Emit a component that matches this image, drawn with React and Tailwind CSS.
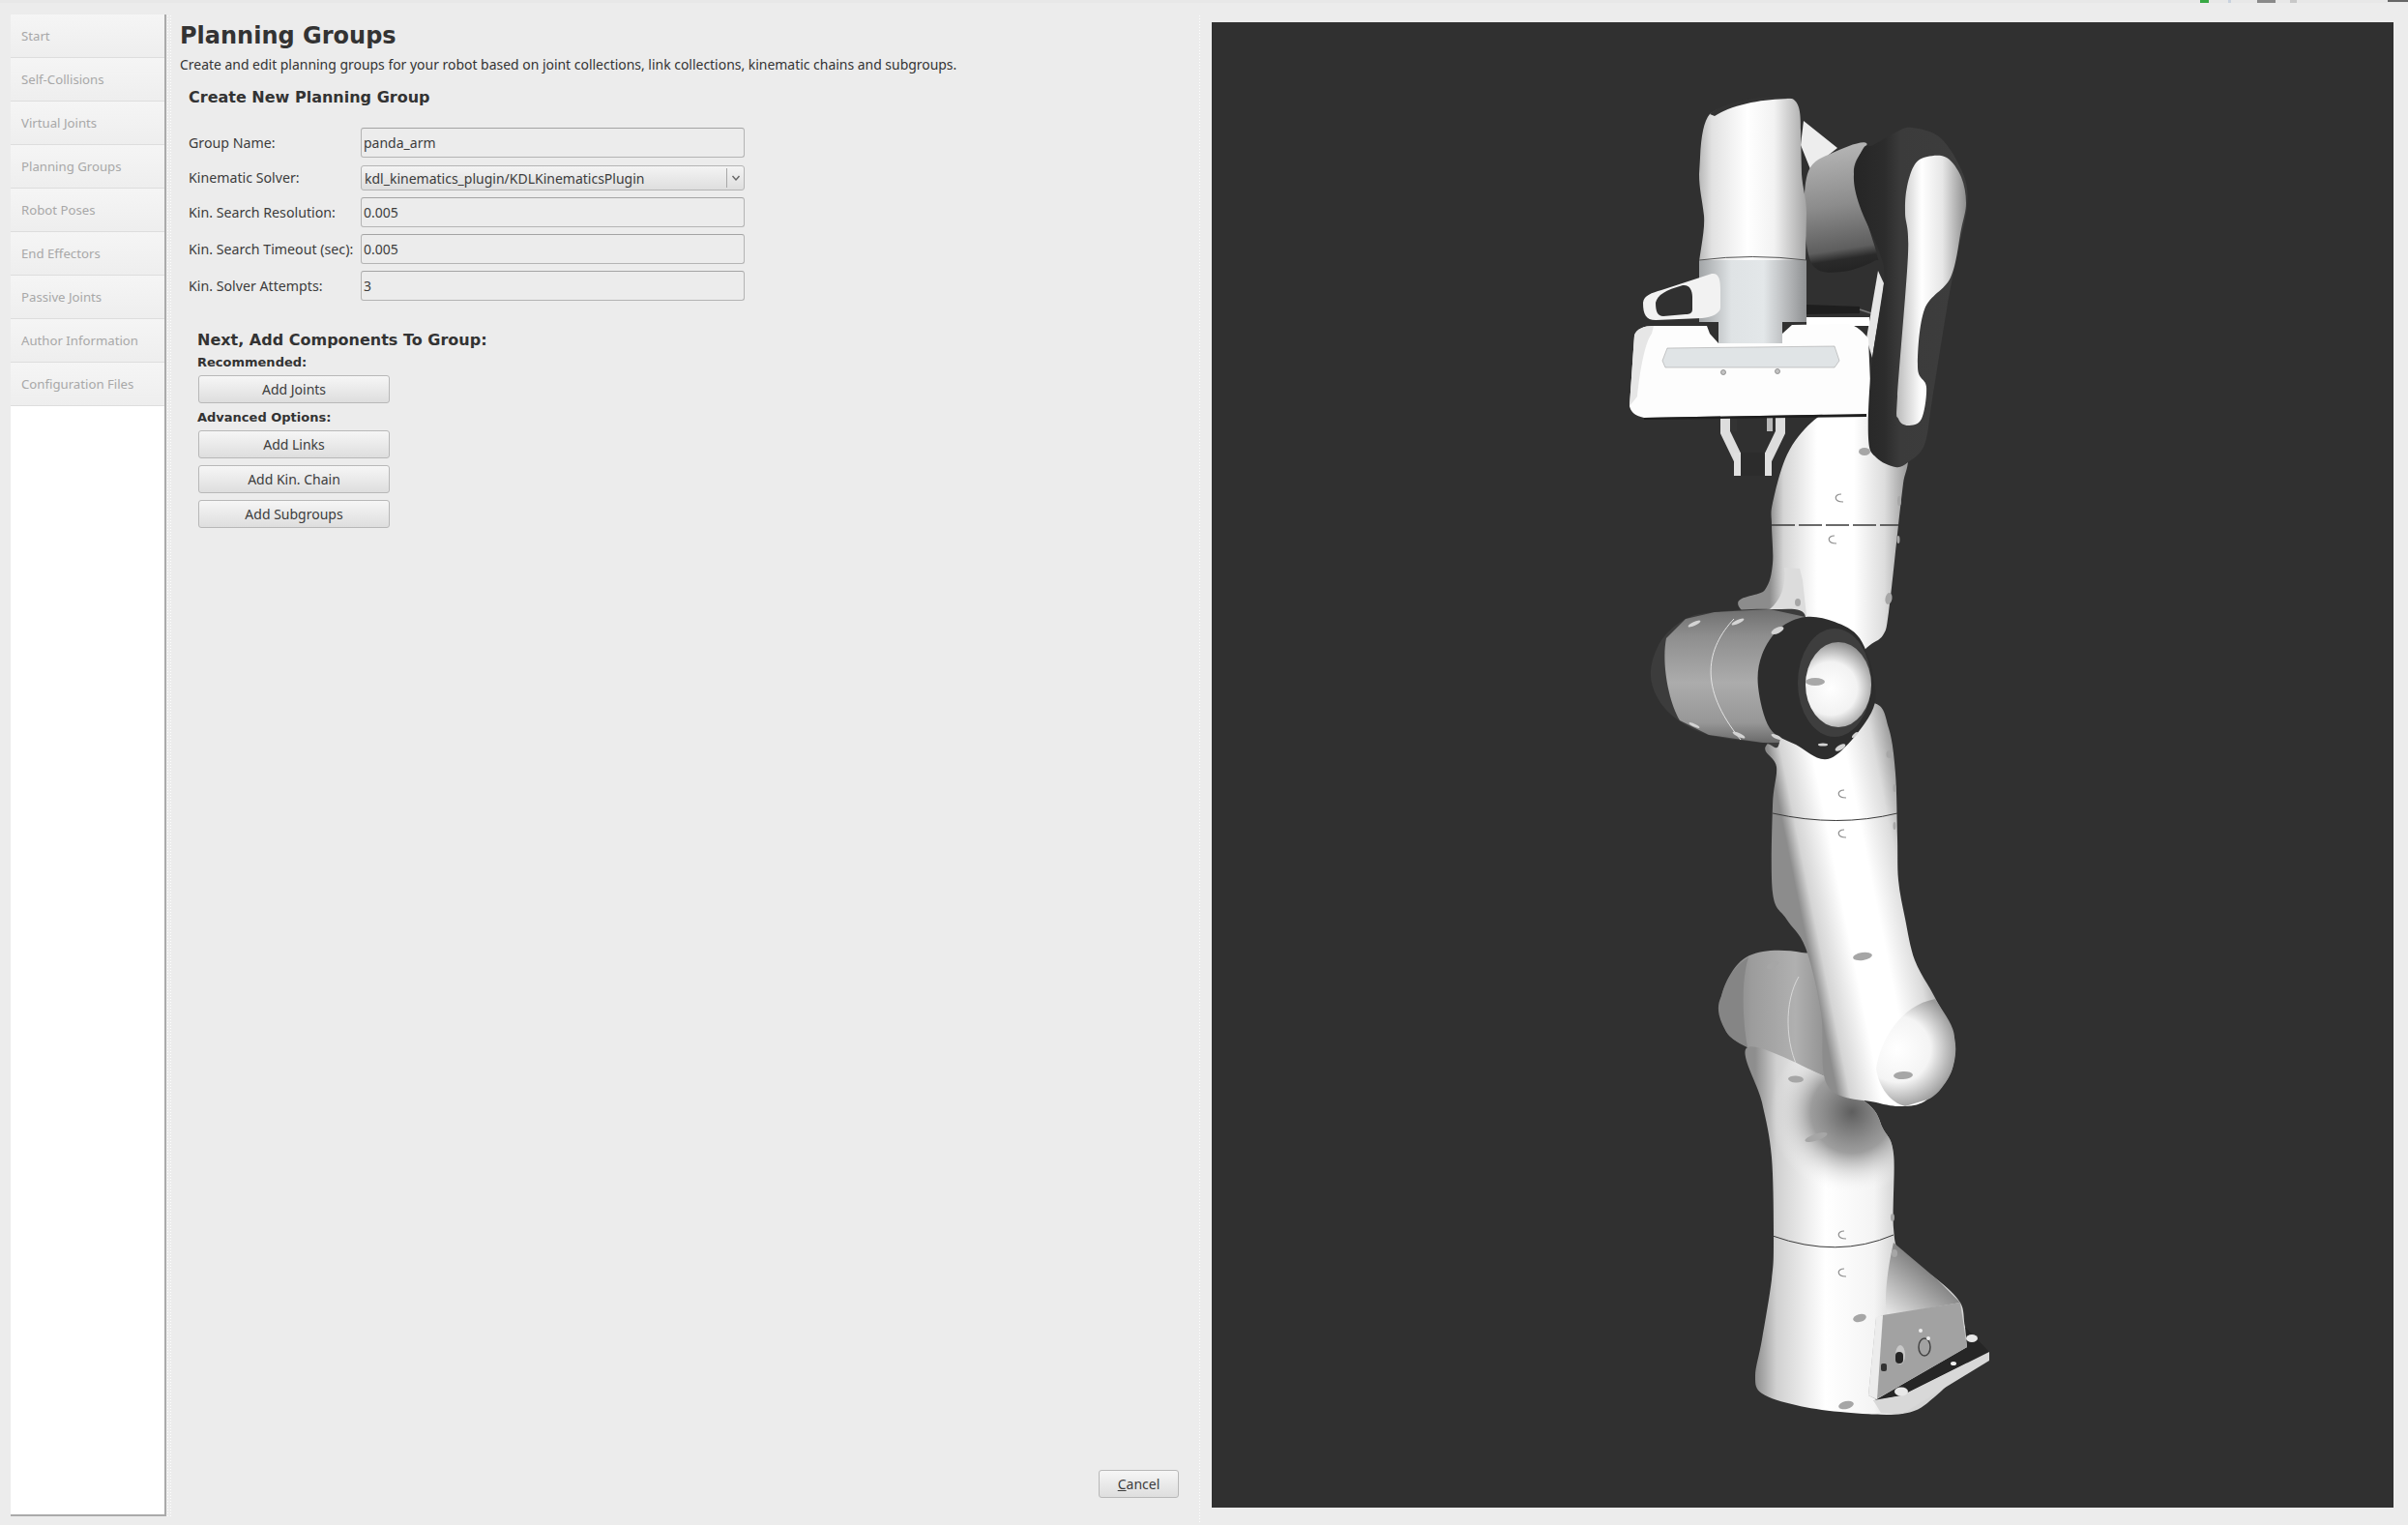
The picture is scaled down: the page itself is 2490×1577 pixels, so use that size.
const steps = [
  'Start',
  'Self-Collisions',
  'Virtual Joints',
  'Planning Groups',
  'Robot Poses',
  'End Effectors',
  'Passive Joints',
  'Author Information',
  'Configuration Files',
];

const screws = [
  [1793, 133, 7, 3.5, 0], [1796, 251, 6, 3.5, 0], [1928, 467, 6, 4, 0],
  [1953, 619, 3.5, 6, 10], [1859, 623, 3, 4, 0], [1954, 780, 3.5, 4, 0],
  [1964, 518, 2, 5, 0], [1963, 558, 1.5, 4, 0], [1959, 815, 1.5, 4, 0],
  [1959, 854, 1.5, 4, 0], [1926, 989, 10, 4, -8], [1968, 1112, 10, 4, -3],
  [1857, 1116, 8, 3.5, 3], [1878, 1176, 12, 3.5, -18], [1833, 998, 7, 3, -25],
  [1957, 1259, 2, 4, 0], [1959, 1296, 3, 4, 0], [1923, 1363, 7, 4, -15],
  [1909, 1453, 8, 4, -12],
];

const drumScrews = [
  [1752, 645, 7, 2, -25], [1797, 643, 7, 2, -25], [1838, 652, 7, 3, -25],
  [1752, 750, 6, 1.5, 25], [1798, 760, 7, 2, 25], [1837, 762, 6, 2, 25],
  [1903, 773, 6, 2.5, -30], [1885, 770, 5, 1.5, 0], [1918, 760, 4, 1.5, -45],
];

const crescents = [
  [1900, 515], [1893, 558], [1903, 821], [1903, 862], [1903, 1277], [1903, 1316],
];

//// closed smooth outline through the given points ////
const smooth = (pts) => {
  const n = pts.length;
  let d = `M${pts[0][0]} ${pts[0][1]}`;
  for (let i = 0; i < n; i++) {
    const p0 = pts[(i - 1 + n) % n];
    const p1 = pts[i];
    const p2 = pts[(i + 1) % n];
    const p3 = pts[(i + 2) % n];
    const c1x = p1[0] + (p2[0] - p0[0]) / 6;
    const c1y = p1[1] + (p2[1] - p0[1]) / 6;
    const c2x = p2[0] - (p3[0] - p1[0]) / 6;
    const c2y = p2[1] - (p3[1] - p1[1]) / 6;
    d += `C${c1x} ${c1y} ${c2x} ${c2y} ${p2[0]} ${p2[1]}`;
  }
  return d + 'Z';
};

const baseOutline = [
  [1807, 1083], [1822, 1140], [1832, 1197], [1834, 1283], [1832, 1323], [1822, 1385], [1815, 1423],
  [1822, 1441], [1857, 1453], [1903, 1460], [1967, 1462], [2000, 1445], [2040, 1400],
  [2032, 1372], [2027, 1347], [2003, 1323], [1967, 1297], [1958, 1270], [1958, 1193], [1947, 1167],
  [1932, 1142], [1880, 1110],
];

const lowerLink = [
  [1827, 770], [1837, 793], [1833, 833], [1833, 923], [1847, 950], [1867, 980], [1883, 1047], [1890, 1123],
  [1940, 1140], [1970, 1144], [1993, 1137], [2017, 1110], [2021, 1073], [2000, 1030], [1980, 993], [1970, 950],
  [1963, 910], [1962, 867], [1960, 800], [1953, 753], [1937, 727], [1880, 740],
];

const upperLink = [
  [1873, 437], [1848, 470], [1833, 520], [1832, 543], [1833, 583], [1825, 610], [1800, 630], [1900, 700],
  [1930, 670], [1947, 657], [1953, 633], [1963, 543], [1968, 500], [1972, 470], [1950, 428], [1900, 424],
];

const backJoint = [
  [1863, 985], [1823, 984], [1797, 997], [1780, 1030], [1783, 1063], [1807, 1083], [1900, 1130], [1900, 1000],
];

const drumOutline = [
  [1707, 693], [1718, 662], [1743, 640], [1773, 633], [1830, 630], [1867, 638], [1840, 700], [1840, 768],
  [1823, 768], [1767, 760], [1733, 743], [1713, 720],
];

const ringOutline = [
  [1867, 638], [1897, 643], [1923, 660], [1937, 700], [1935, 737], [1893, 784], [1857, 770], [1830, 753],
  [1818, 710], [1822, 677], [1840, 650],
];

const armOutline = [
  [1937, 150], [1960, 137], [1977, 132], [2007, 143], [2030, 180], [2034, 213], [2023, 267], [2013, 320],
  [1998, 413], [1990, 460], [1973, 478], [1960, 483], [1940, 473], [1932, 453], [1935, 380], [1948, 293],
  [1943, 260], [1923, 213], [1917, 180], [1927, 153],
];

const armInset = [
  [1993, 162], [2013, 163], [2028, 183], [2033, 210], [2028, 237], [2017, 287], [1990, 320], [1983, 380],
  [1992, 400], [1987, 433], [1973, 440], [1963, 433], [1962, 410], [1973, 263], [1970, 220], [1972, 193], [1980, 170],
];

const wristCyl = [
  [1870, 177], [1895, 158], [1930, 148], [1917, 180], [1940, 260], [1938, 270], [1905, 281], [1875, 275], [1866, 230],
];

function RobotArm() {
  return (
    <svg viewBox="1253 23 1222 1536" className="w-full h-full block">
      <defs>
        <linearGradient id="topLink" gradientUnits="userSpaceOnUse" x1="1757" y1="0" x2="1868" y2="0">
          <stop offset="0" stopColor="#b8b8b8" />
          <stop offset="0.12" stopColor="#e2e2e2" />
          <stop offset="0.45" stopColor="#ffffff" />
          <stop offset="0.7" stopColor="#f2f2f2" />
          <stop offset="1" stopColor="#a4a4a4" />
        </linearGradient>
        <linearGradient id="ring" gradientUnits="userSpaceOnUse" x1="1757" y1="0" x2="1868" y2="0">
          <stop offset="0" stopColor="#a2a5a7" />
          <stop offset="0.3" stopColor="#dfe3e5" />
          <stop offset="0.6" stopColor="#e3e7e9" />
          <stop offset="0.85" stopColor="#b0b2b4" />
          <stop offset="1" stopColor="#8e9092" />
        </linearGradient>
        <linearGradient id="cyl" gradientUnits="userSpaceOnUse" x1="1880" y1="155" x2="1900" y2="285">
          <stop offset="0" stopColor="#b4b4b4" />
          <stop offset="0.45" stopColor="#8c8c8c" />
          <stop offset="0.8" stopColor="#5e5e5e" />
          <stop offset="0.88" stopColor="#2a2a2a" />
          <stop offset="1" stopColor="#222222" />
        </linearGradient>
        <linearGradient id="inset" gradientUnits="userSpaceOnUse" x1="1962" y1="0" x2="2034" y2="0">
          <stop offset="0" stopColor="#bdbdbd" />
          <stop offset="0.35" stopColor="#ffffff" />
          <stop offset="0.65" stopColor="#e6e6e6" />
          <stop offset="1" stopColor="#8a8a8a" />
        </linearGradient>
        <linearGradient id="armShell" gradientUnits="userSpaceOnUse" x1="1920" y1="0" x2="2034" y2="0">
          <stop offset="0" stopColor="#262626" />
          <stop offset="0.25" stopColor="#2c2c2c" />
          <stop offset="0.4" stopColor="#3b3b3b" />
          <stop offset="1" stopColor="#3d3d3d" />
        </linearGradient>
        <linearGradient id="body" gradientUnits="userSpaceOnUse" x1="1830" y1="0" x2="1970" y2="0">
          <stop offset="0" stopColor="#8c8c8c" />
          <stop offset="0.1" stopColor="#d4d4d4" />
          <stop offset="0.35" stopColor="#ffffff" />
          <stop offset="0.62" stopColor="#ffffff" />
          <stop offset="0.85" stopColor="#dcdcdc" />
          <stop offset="1" stopColor="#a0a0a0" />
        </linearGradient>
        <linearGradient id="bodyLow" gradientUnits="userSpaceOnUse" x1="1833" y1="800" x2="1957" y2="775">
          <stop offset="0" stopColor="#8c8c8c" />
          <stop offset="0.1" stopColor="#d4d4d4" />
          <stop offset="0.35" stopColor="#ffffff" />
          <stop offset="0.62" stopColor="#ffffff" />
          <stop offset="0.85" stopColor="#dcdcdc" />
          <stop offset="1" stopColor="#a0a0a0" />
        </linearGradient>
        <linearGradient id="back" gradientUnits="userSpaceOnUse" x1="1778" y1="0" x2="1890" y2="0">
          <stop offset="0" stopColor="#7e7e7e" />
          <stop offset="0.3" stopColor="#9c9c9c" />
          <stop offset="0.7" stopColor="#b0b0b0" />
          <stop offset="1" stopColor="#909090" />
        </linearGradient>
        <radialGradient id="shadow" gradientUnits="userSpaceOnUse" cx="1915" cy="1150" r="85">
          <stop offset="0" stopColor="#5e5e5e" />
          <stop offset="0.5" stopColor="#8e8e8e" stopOpacity="0.85" />
          <stop offset="1" stopColor="#ffffff" stopOpacity="0" />
        </radialGradient>
        <linearGradient id="base" gradientUnits="userSpaceOnUse" x1="1815" y1="0" x2="1960" y2="0">
          <stop offset="0" stopColor="#8e8e8e" />
          <stop offset="0.15" stopColor="#d0d0d0" />
          <stop offset="0.5" stopColor="#ffffff" />
          <stop offset="0.85" stopColor="#f4f4f4" />
          <stop offset="1" stopColor="#d4d4d4" />
        </linearGradient>
        <linearGradient id="footTop" gradientUnits="userSpaceOnUse" x1="1995" y1="1310" x2="1950" y2="1365">
          <stop offset="0" stopColor="#7c7c7c" />
          <stop offset="1" stopColor="#f0f0f0" />
        </linearGradient>
        <linearGradient id="drum" gradientUnits="userSpaceOnUse" x1="0" y1="630" x2="0" y2="768">
          <stop offset="0" stopColor="#6f6f6f" />
          <stop offset="0.2" stopColor="#8e8e8e" />
          <stop offset="0.55" stopColor="#acacac" />
          <stop offset="0.85" stopColor="#979797" />
          <stop offset="1" stopColor="#6a6a6a" />
        </linearGradient>
        <radialGradient id="sphere" gradientUnits="userSpaceOnUse" cx="1893" cy="712" r="50">
          <stop offset="0" stopColor="#ffffff" />
          <stop offset="0.55" stopColor="#f2f2f2" />
          <stop offset="1" stopColor="#8a8a8a" />
        </radialGradient>
        <radialGradient id="elbow" gradientUnits="userSpaceOnUse" cx="1962" cy="1085" r="62">
          <stop offset="0" stopColor="#ffffff" />
          <stop offset="0.55" stopColor="#f4f4f4" />
          <stop offset="1" stopColor="#9a9a9a" />
        </radialGradient>
      </defs>

      {/* base joint behind the elbow */}
      <path d={smooth(backJoint)} fill="url(#back)" />
      <path d="M1808 990 C1800 1015 1802 1055 1807 1083 C1795 1078 1787 1072 1783 1063 C1776 1050 1775 1040 1780 1030 C1785 1012 1795 998 1808 990 Z" fill="#858585" />
      <path d="M1860 1010 C1845 1035 1845 1080 1862 1110" stroke="#d8d8d8" strokeWidth="1" fill="none" />

      {/* base */}
      <path d={smooth(baseOutline)} fill="url(#base)" />
      <path d={smooth(baseOutline)} fill="url(#shadow)" />
      <path d="M1958 1285 L2003 1323 L2027 1347 L1952 1360 C1948 1350 1950 1320 1958 1285 Z" fill="url(#footTop)" />
      <path d="M2032 1372 L2057 1398 L1967 1443 L1937 1449 L2034 1393 Z" fill="#262626" />
      <path d="M1937 1448 L1967 1443 L2057 1398 L2057 1407 L1967 1462 L1945 1461 Z" fill="#d8d8d8" />
      <path d="M1947 1360 L2027 1347 L2034 1393 L1940 1447 L1932 1443 L1940 1363 Z" fill="#a2a2a2" />
      <path d="M1940 1362 L1947 1360 L1941 1447 L1932 1443 Z" fill="#ececec" />
      <ellipse cx="2039" cy="1384" rx="6" ry="4" fill="#e8e8e8" />
      <ellipse cx="2020" cy="1410" rx="3" ry="2" fill="#f0f0f0" />
      <ellipse cx="1966" cy="1439" rx="7" ry="4.5" fill="#e8e8e8" />
      <ellipse cx="1965" cy="1401" rx="5" ry="10" fill="#c8c8c8" />
      <rect x="1960" y="1398" width="8" height="12" rx="4" fill="#252525" />
      <rect x="1945" y="1410" width="6" height="8" rx="2" fill="#333333" />
      <ellipse cx="1990" cy="1393" rx="6" ry="9" fill="none" stroke="#444444" strokeWidth="1.5" />
      <circle cx="1986" cy="1376" r="2" fill="#eeeeee" />
      <circle cx="1994" cy="1384" r="2" fill="#eeeeee" />

      {/* lower link with the elbow end */}
      <path d={smooth(lowerLink)} fill="url(#bodyLow)" />
      <path d="M1940 1105 C1945 1075 1965 1040 2001 1033 C2012 1050 2021 1062 2021 1073 C2022 1090 2020 1105 2017 1110 C2010 1125 2000 1135 1993 1137 L1970 1144 C1955 1140 1943 1125 1940 1105 Z" fill="url(#elbow)" />

      {/* upper link */}
      <path d={smooth(upperLink)} fill="url(#body)" />
      <path d="M1845 587 L1861 588 L1864 600 L1868 637 L1830 630 C1842 620 1847 605 1845 587 Z" fill="#dcdcdc" />

      {/* seams */}
      <path d="M1832 543 L1963 543" stroke="#3a3a3a" strokeWidth="1.5" strokeDasharray="24 4" fill="none" />
      <path d="M1833 841 Q1900 856 1962 841" stroke="#3a3a3a" strokeWidth="1" fill="none" />
      <path d="M1833 1278 Q1900 1302 1958 1277" stroke="#3a3a3a" strokeWidth="1" fill="none" />

      {/* drum joint */}
      <path d={smooth(drumOutline)} fill="#3c3c3c" />
      <path d="M1723 660 L1743 640 L1773 633 L1830 630 L1867 638 L1840 700 L1840 768 L1823 768 L1767 760 L1737 745 C1725 725 1718 685 1723 660 Z" fill="url(#drum)" />
      <path d="M1793 640 C1765 670 1755 710 1800 765" stroke="#e4e4e4" strokeWidth="1" fill="none" />
      <path d={smooth(ringOutline)} fill="#2d2d2d" />
      <ellipse cx="1897" cy="706" rx="38" ry="56" fill="#3e3e3e" />
      <ellipse cx="1901" cy="708" rx="34" ry="44" fill="url(#sphere)" />
      <ellipse cx="1877" cy="705" rx="10" ry="4" fill="#a8a8a8" />
      {drumScrews.map(([cx, cy, rx, ry, rot]) => (
        <ellipse key={`${cx}-${cy}`} cx={cx} cy={cy} rx={rx} ry={ry} fill="#d4d4d4" transform={`rotate(${rot} ${cx} ${cy})`} />
      ))}

      {/* screws */}
      {screws.map(([cx, cy, rx, ry, rot]) => (
        <ellipse key={`${cx}-${cy}`} cx={cx} cy={cy} rx={rx} ry={ry} fill="#a6a6a6" transform={`rotate(${rot} ${cx} ${cy})`} />
      ))}
      {crescents.map(([x, y]) => (
        <path key={`${x}-${y}`} d={`M${x + 4} ${y - 4} C${x - 4} ${y - 4} ${x - 4} ${y + 4} ${x + 6} ${y + 4}`} stroke="#8c8c8c" strokeWidth="1.2" fill="none" />
      ))}

      {/* gripper fingers */}
      <path d="M1784 432 L1784 447 L1798 476" stroke="#dddddd" strokeWidth="10" fill="none" />
      <path d="M1841 432 L1841 447 L1827 476" stroke="#dddddd" strokeWidth="10" fill="none" />
      <rect x="1793" y="468" width="39" height="24" fill="#e0e0e0" />
      <rect x="1800" y="468" width="25" height="24" fill="#2c2c2c" />
      <rect x="1790" y="432" width="6" height="14" fill="#333333" />
      <rect x="1827" y="432" width="6" height="14" fill="#b8b8b8" />

      {/* wrist cylinder and connector */}
      <path d="M1865 125 L1900 153 L1872 175 L1862 150 Z" fill="#ededed" />
      <path d={smooth(wristCyl)} fill="url(#cyl)" />

      {/* top link */}
      <path d="M1768 118 C1785 105 1830 98 1853 102 C1862 106 1862 120 1862 135 L1863 180 C1864 195 1868 205 1868 220 L1867 270 L1757 270 C1760 250 1763 235 1762 223 C1760 205 1757 195 1757 180 L1758 163 C1759 140 1762 125 1768 118 Z" fill="url(#topLink)" />
      <path d="M1768 118 C1785 103 1830 97 1853 102 C1830 102 1795 106 1773 120 Z" fill="#333333" />
      <rect x="1757" y="269" width="111" height="64" fill="url(#ring)" />
      <path d="M1757 269 Q1812 262 1868 269" stroke="#555555" strokeWidth="1" fill="none" />
      <rect x="1777" y="333" width="66" height="22" fill="url(#ring)" />

      {/* camera handle */}
      <path d="M1699 313 C1700 305 1708 303 1718 300 L1770 283 C1778 282 1779 290 1779 300 L1779 318 C1779 324 1770 328 1760 329 L1712 331 C1702 331 1699 325 1699 313 Z" fill="#f2f2f2" />
      <path d="M1712 313 C1714 305 1722 300 1740 295 C1747 294 1750 300 1750 307 L1750 320 C1750 324 1747 325 1743 325 L1720 327 C1714 327 1712 322 1712 313 Z" fill="#303030" />

      {/* cable */}
      <path d="M1868 315 L1923 317 L1923 324 L1868 325 Z" fill="#1e1e1e" />
      <path d="M1923 320 L1935 324" stroke="#777777" strokeWidth="1.5" fill="none" />

      {/* hand */}
      <path d="M1942 280 L1948 293 L1936 370 L1930 350 Z" fill="#e6e6e6" />
      <rect x="1868" y="328" width="65" height="9" fill="#ffffff" />
      <path d="M1690 347 C1692 340 1700 337 1710 337 L1765 337 L1768 345 L1777 355 L1843 355 L1843 345 L1853 336 L1910 335 C1920 336 1928 345 1932 350 L1935 420 L1930 428 L1700 432 C1690 430 1686 425 1685 420 Z" fill="#fdfdfd" />
      <path d="M1690 347 C1692 340 1700 337 1710 337 L1708 345 C1700 355 1695 390 1693 410 L1685 420 Z" fill="#e6e6e6" />
      <path d="M1700 432 L1930 428 L1930 431 L1700 434 Z" fill="#1e1e1e" />
      <path d="M1724 360 L1897 358 L1902 373 L1897 380 L1722 380 L1719 373 Z" fill="#e0e4e6" stroke="#999999" strokeWidth="0.5" />
      <circle cx="1782" cy="385" r="2.5" fill="#c4c4c4" stroke="#777777" strokeWidth="0.7" />
      <circle cx="1838" cy="384" r="2.5" fill="#c4c4c4" stroke="#777777" strokeWidth="0.7" />

      {/* dark arm shell */}
      <path d={smooth(armOutline)} fill="url(#armShell)" />
      <path d={smooth(armInset)} fill="url(#inset)" />
    </svg>
  );
}

function FieldBox({ children }) {
  return (
    <div className="h-[31px] rounded-[3px] border border-[#b4b4b4] border-t-[#a4a4a4] bg-[#ececec] px-[2px] flex items-center text-[14px] text-[#3c3c3c]">
      {children}
    </div>
  );
}

function PushButton({ children, className }) {
  return (
    <button className={`rounded-[3px] border border-[#b8b8b8] bg-gradient-to-b from-[#f6f6f6] to-[#dedede] flex items-center justify-center text-[14px] text-[#3c3c3c] ${className}`}>
      {children}
    </button>
  );
}

function Label({ children, className = '' }) {
  return <div className={`flex items-center text-[14.2px] text-[#3c3c3c] ${className}`}>{children}</div>;
}

export default function App() {
  return (
    <div className="w-[2490px] h-[1577px] overflow-hidden bg-[#ececec] font-['Noto_Sans',sans-serif] flex flex-col">
      {/* window edge */}
      <div className="h-[3px] bg-[#e8e8e8] flex items-start pl-[2275px]">
        <div className="w-[9px] h-[3px] bg-[#39a845]" />
        <div className="w-[3px] h-[3px] bg-[#c9d2de] ml-[20px]" />
        <div className="w-[19px] h-[3px] bg-[#8a8a8a] ml-[27px]" />
        <div className="w-[7px] h-[3px] bg-[#c8c8c8] ml-[15px]" />
        <div className="w-[21px] h-[2px] bg-[#666666] ml-[94px]" />
      </div>

      <div className="flex flex-1">
        {/* steps */}
        <div className="ml-[11px] mt-[12px] w-[161px] h-[1553px] bg-white border-r-2 border-b-2 border-[#aaaaaa]">
          {steps.map((step) => (
            <div key={step} className="h-[45px] pl-[11px] pt-[2px] flex items-center border-b border-[#dddddd] bg-gradient-to-b from-[#f5f5f5] to-[#eeeeee] text-[13.2px] text-[#a8a8a8]">
              {step}
            </div>
          ))}
        </div>
        <div className="w-[5px] mt-[12px] h-[1553px] bg-[radial-gradient(circle,#ffffff_1px,transparent_1px)] bg-[length:3px_3px]" />

        {/* planning groups pane */}
        <div className="w-[1062px] pl-[9px] flex flex-col text-[#333333]">
          <h1 className="mt-[18px] h-[32px] leading-[32px] text-[24px] font-bold font-['DejaVu_Sans',sans-serif]">Planning Groups</h1>
          <p className="mt-[4px] h-[20px] leading-[20px] text-[13.95px]">
            Create and edit planning groups for your robot based on joint collections, link collections, kinematic chains and subgroups.
          </p>

          <div className="pl-[9px] mt-[13px]">
            <h2 className="h-[22px] leading-[22px] text-[16px] font-bold font-['DejaVu_Sans',sans-serif]">Create New Planning Group</h2>

            <div className="mt-[20px] grid grid-cols-[178px_397px]">
              <Label>Group Name:</Label>
              <FieldBox>panda_arm</FieldBox>

              <Label className="mt-[8px]">Kinematic Solver:</Label>
              <div className="mt-[8px] h-[26px] rounded-[3px] border border-[#b4b4b4] bg-gradient-to-b from-[#f4f4f4] to-[#dedede] pl-[3px] flex items-center text-[14px] text-[#3c3c3c]">
                <span className="flex-1">kdl_kinematics_plugin/KDLKinematicsPlugin</span>
                <span className="w-[18px] h-[20px] border-l border-[#a8a8a8] flex items-center justify-center">
                  <svg width="10" height="8" viewBox="0 0 10 8">
                    <path d="M1.5 2 L5 6 L8.5 2" stroke="#666666" strokeWidth="1.4" fill="none" />
                  </svg>
                </span>
              </div>

              <Label className="mt-[7px]">Kin. Search Resolution:</Label>
              <div className="mt-[7px]"><FieldBox>0.005</FieldBox></div>

              <Label className="mt-[7px]">Kin. Search Timeout (sec):</Label>
              <div className="mt-[7px]"><FieldBox>0.005</FieldBox></div>

              <Label className="mt-[7px]">Kin. Solver Attempts:</Label>
              <div className="mt-[7px]"><FieldBox>3</FieldBox></div>
            </div>

            <div className="pl-[9px] mt-[30px] font-['DejaVu_Sans',sans-serif]">
              <h3 className="h-[22px] leading-[22px] text-[16px] font-bold">Next, Add Components To Group:</h3>
              <div className="mt-[4px] h-[16px] leading-[16px] text-[13px] font-bold">Recommended:</div>
              <div className="mt-[5px] font-['Noto_Sans',sans-serif]">
                <PushButton className="w-[198px] h-[29px] ml-[1px]">Add Joints</PushButton>
              </div>
              <div className="mt-[7px] h-[16px] leading-[16px] text-[13px] font-bold">Advanced Options:</div>
              <div className="mt-[5px] flex flex-col gap-[7px] font-['Noto_Sans',sans-serif]">
                <PushButton className="w-[198px] h-[29px] ml-[1px]">Add Links</PushButton>
                <PushButton className="w-[198px] h-[29px] ml-[1px]">Add Kin. Chain</PushButton>
                <PushButton className="w-[198px] h-[29px] ml-[1px]">Add Subgroups</PushButton>
              </div>
            </div>
          </div>

          <div className="mt-auto mb-[28px] mr-[20px] flex justify-end">
            <PushButton className="w-[83px] h-[29px]">
              <span><span className="underline">C</span>ancel</span>
            </PushButton>
          </div>
        </div>

        <div className="w-[4px] mt-[12px] h-[1560px] bg-[radial-gradient(circle,#ffffff_1px,transparent_1px)] bg-[length:3px_3px]" />

        {/* 3d viewer */}
        <div className="ml-[10px] mt-[20px] w-[1222px] h-[1536px] bg-[#303030]">
          <RobotArm />
        </div>
      </div>
    </div>
  );
}
